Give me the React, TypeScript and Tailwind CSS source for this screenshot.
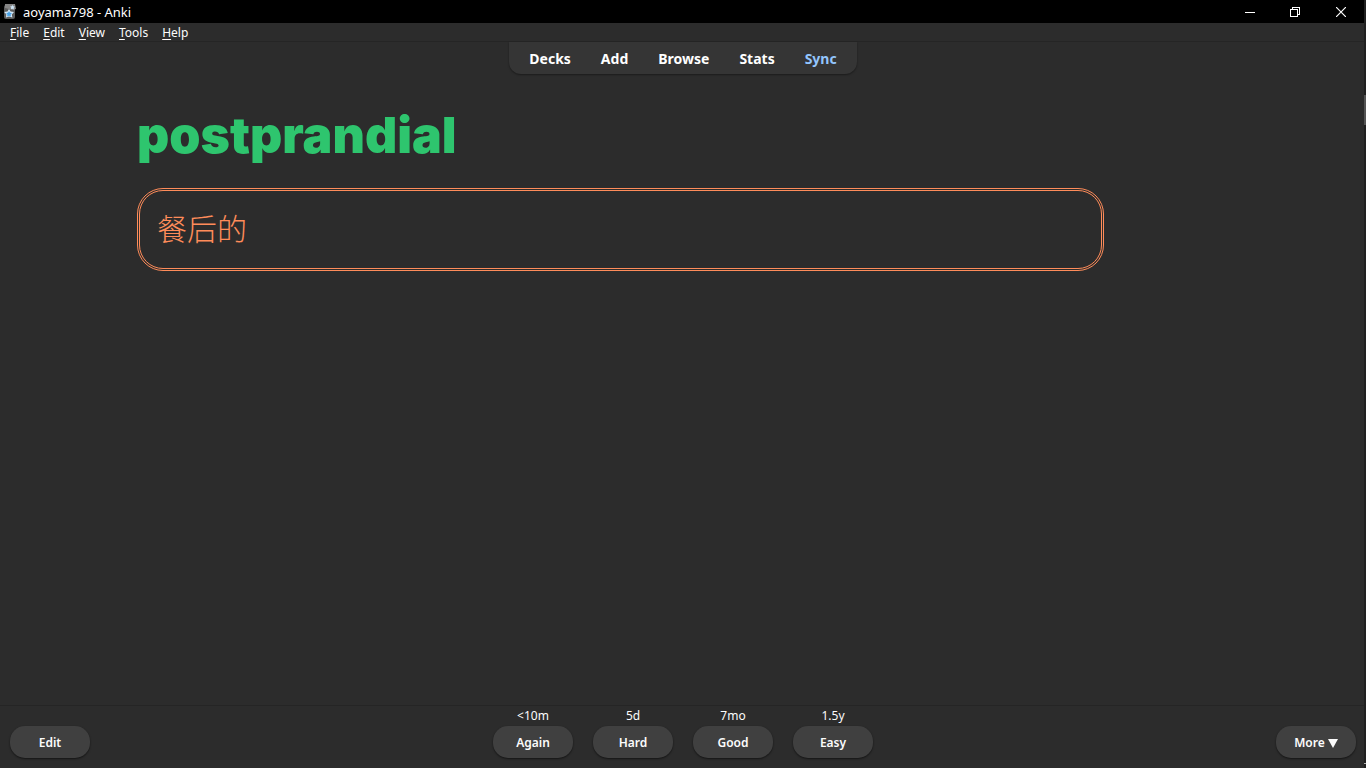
const menus = ['File', 'Edit', 'View', 'Tools', 'Help'];
const links = ['Decks', 'Add', 'Browse', 'Stats'];
const answers = [
  { interval: '<10m', label: 'Again' },
  { interval: '5d', label: 'Hard' },
  { interval: '7mo', label: 'Good' },
  { interval: '1.5y', label: 'Easy' },
];

const pill =
  'flex h-8 w-20 items-center justify-center rounded-[15px] bg-[#404040] pt-[2px] text-[12px] font-semibold text-[#fcfcfc] shadow-[0_1px_2px_rgba(0,0,0,0.55)]';

function AnkiIcon() {
  return (
    <svg width="12" height="15" viewBox="0 0 12 15" aria-hidden="true">
      <rect y="1" width="11" height="14" rx="2" fill="#5c5c5c" />
      <path d="M1 0h10l1 5-3 1-8-2z" fill="#858585" />
      <path d="M5 5l1.600 2.600 3.400.4-2.200 2.600.6 3-3.400-1.100L2 13.600l.3-3.300L.2 8l3.300-.5z" fill="#d5eafa" />
      <path d="M5 7l1 1.700 2 .3-1.400 1.600.4 1.800-2-.7-1.900.8.3-2L2.100 9l2-.3z" fill="#4aa3e8" />
      <path d="M8.500 1l.7 1.300 1.600.3-1.100 1.200.2 1.600-1.500-.7-1.500.6.300-1.600L6.100 2.500l1.600-.2z" fill="#cfe6f8" />
    </svg>
  );
}

export default function App() {
  return (
    <div className="relative flex h-screen flex-col bg-[#2c2c2c] font-['Noto_Sans','Noto_Sans_CJK_SC',sans-serif] text-[#fcfcfc]">
      <header className="flex h-[23px] shrink-0 items-center bg-black pr-[2px]">
        <div className="flex flex-1 items-center gap-[7px] pl-1">
          <AnkiIcon />
          <h1 className="text-[13px] leading-4 text-white">aoyama798 - Anki</h1>
        </div>
        <div className="flex h-5">
          <button aria-label="Minimize" className="flex w-[45px] items-center justify-center">
            <svg width="10" height="10" viewBox="0 0 10 10"><path d="M0 5h10v1H0z" fill="#fff" /></svg>
          </button>
          <button aria-label="Restore" className="flex w-[45px] items-center justify-center">
            <svg width="10" height="10" viewBox="0 0 10 10" fill="none" stroke="#fff" shapeRendering="crispEdges">
              <path d="M.5 2.500h7v7h-7zM2.500 2.500v-2h7v7h-2" />
            </svg>
          </button>
          <button aria-label="Close" className="flex w-[47px] items-center justify-center">
            <svg width="10" height="10" viewBox="0 0 10 10" stroke="#fff" strokeWidth="1.200">
              <path d="M0 0l10 10M10 0L0 10" />
            </svg>
          </button>
        </div>
      </header>

      <nav aria-label="Menu bar" className="flex h-[19px] shrink-0 gap-[14px] border-b border-[#252525] pl-[10px] pt-[2px] text-[12px] leading-4">
        {menus.map((m) => (
          <button key={m}>
            <span className="inline-block first-letter:underline first-letter:underline-offset-2">{m}</span>
          </button>
        ))}
      </nav>

      <nav aria-label="Main" className="flex shrink-0 justify-center">
        <div className="flex h-8 items-center gap-[30px] rounded-b-[12px] bg-[#353535] px-5 text-[14px] font-bold shadow-[0_1px_2px_rgba(0,0,0,0.4)]">
          {links.map((l) => (
            <a key={l} href="#" className="text-white">{l}</a>
          ))}
          <a href="#" className="text-[#93c5fd]">Sync</a>
        </div>
      </nav>

      <main className="min-h-0 flex-1 pl-[137px] pr-[262px] pt-8">
        <h2 className="font-['Inter',sans-serif] text-[50px] font-black leading-[58px] text-[#2ec56e]">postprandial</h2>
        <div lang="zh-CN" className="mt-6 flex h-[83px] items-center rounded-[26px] border-3 border-double border-[#ff8c5a] px-[17px] pb-1 font-['Noto_Sans_CJK_SC',sans-serif] text-[30px] font-light text-[#ff8c5a]">
          餐后的
        </div>
      </main>

      <footer className="flex h-[63px] shrink-0 items-end border-t border-[#252525] px-[10px] pb-[10px]">
        <div className="flex-1">
          <button className={pill}>Edit</button>
        </div>
        <div className="flex gap-5">
          {answers.map((a) => (
            <div key={a.label} className="flex flex-col items-center gap-[2px]">
              <span id={a.label} className="text-[12px] leading-4">{a.interval}</span>
              <button aria-describedby={a.label} className={pill}>{a.label}</button>
            </div>
          ))}
        </div>
        <div className="flex flex-1 justify-end">
          <button className={`${pill} gap-[3px]`}>
            More
            <svg width="10" height="9" viewBox="0 0 10 9" aria-hidden="true"><path d="M0 0h10L5 9z" fill="#fcfcfc" /></svg>
          </button>
        </div>
      </footer>

      <div className="absolute inset-y-0 right-0 flex w-[2px] flex-col justify-between bg-[#202020] pb-1 pt-[95px]">
        <div className="h-[30px] bg-[#545454]" />
        <div className="h-px bg-[#b0b0b0]" />
      </div>
    </div>
  );
}
